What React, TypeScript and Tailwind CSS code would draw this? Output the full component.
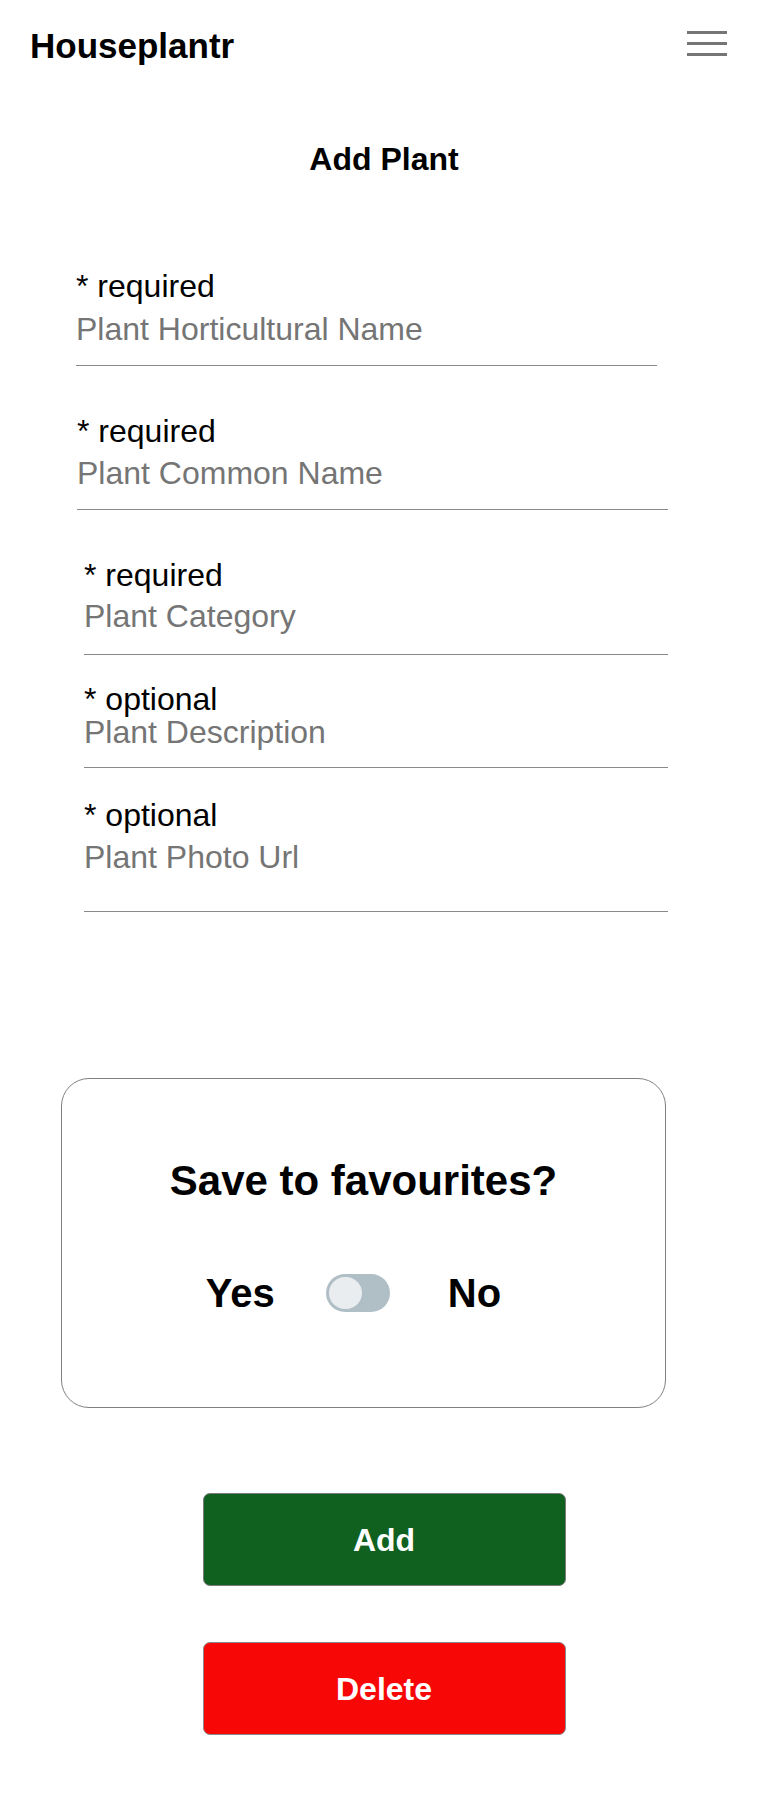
import React, { useState } from "react";

const fields = [
  { note: "* required", placeholder: "Plant Horticultural Name", wrap: "ml-[76px] w-[581px] pt-0 pb-[16px]", gap: "mt-[5px]" },
  { note: "* required", placeholder: "Plant Common Name", wrap: "ml-[77px] w-[591px] pt-[47px] pb-[16px]", gap: "mt-[4px]" },
  { note: "* required", placeholder: "Plant Category", wrap: "ml-[84px] w-[584px] pt-[47px] pb-[18px]", gap: "mt-[3px]" },
  { note: "* optional", placeholder: "Plant Description", wrap: "ml-[84px] w-[584px] pt-[26px] pb-[15px]", gap: "-mt-[5px]" },
  { note: "* optional", placeholder: "Plant Photo Url", wrap: "ml-[84px] w-[584px] pt-[29px] pb-[34px]", gap: "mt-[4px]" },
];

export default function App() {
  const [favourite, setFavourite] = useState(false);

  return (
    <div className="min-h-[1815px] bg-white text-black font-['Liberation_Sans',Arial,sans-serif]">
      {/* Header */}
      <header className="flex items-center justify-between pl-[30px] pr-[41px] pt-[26px] pb-[22px]">
        <h1 className="text-[35px] font-bold leading-[40px]">Houseplantr</h1>
        <button className="mb-[6px] flex flex-col gap-[8px] w-[40px]">
          <span className="block h-[3px] bg-[#757575]" />
          <span className="block h-[3px] bg-[#757575]" />
          <span className="block h-[3px] bg-[#757575]" />
        </button>
      </header>

      <h2 className="mt-[51px] text-center text-[32px] font-bold leading-[40px]">Add Plant</h2>

      {/* Form fields */}
      <form className="mt-[89px] flex flex-col">
        {fields.map((f) => (
          <label key={f.placeholder} className={`block border-b border-[#8a8a8a] ${f.wrap}`}>
            <span className="block text-[32px] leading-[36px]">{f.note}</span>
            <input
              type="text"
              placeholder={f.placeholder}
              className={`block w-full bg-transparent text-[32px] leading-[40px] outline-none placeholder:text-[#757575] ${f.gap}`}
            />
          </label>
        ))}
      </form>

      {/* Favourites card */}
      <div className="ml-[61px] mt-[166px] w-[605px] h-[330px] rounded-[28px] border border-[#808080] flex flex-col items-center">
        <p className="mt-[78px] text-[42px] font-bold leading-[48px]">Save to favourites?</p>
        <div className="mt-[66px] mr-[20px] flex items-center">
          <span className="text-[40px] font-bold leading-[44px]">Yes</span>
          <button
            type="button"
            onClick={() => setFavourite(!favourite)}
            className={`ml-[51px] mr-[58px] w-[64px] h-[38px] rounded-full bg-[#b0bec5] p-[3px] flex ${favourite ? "justify-end" : "justify-start"}`}
          >
            <span className="block w-[33px] h-[32px] rounded-full bg-[#e9edf0]" />
          </button>
          <span className="text-[40px] font-bold leading-[44px]">No</span>
        </div>
      </div>

      {/* Actions */}
      <div className="mt-[85px] flex flex-col items-center gap-[56px]">
        <button className="w-[363px] h-[93px] rounded-[7px] border border-[#7a7a7a] bg-[#106020] text-white text-[32px] font-bold">
          Add
        </button>
        <button className="w-[363px] h-[93px] rounded-[7px] border border-[#8a8a8a] bg-[#f80707] text-white text-[32px] font-bold">
          Delete
        </button>
      </div>
    </div>
  );
}
